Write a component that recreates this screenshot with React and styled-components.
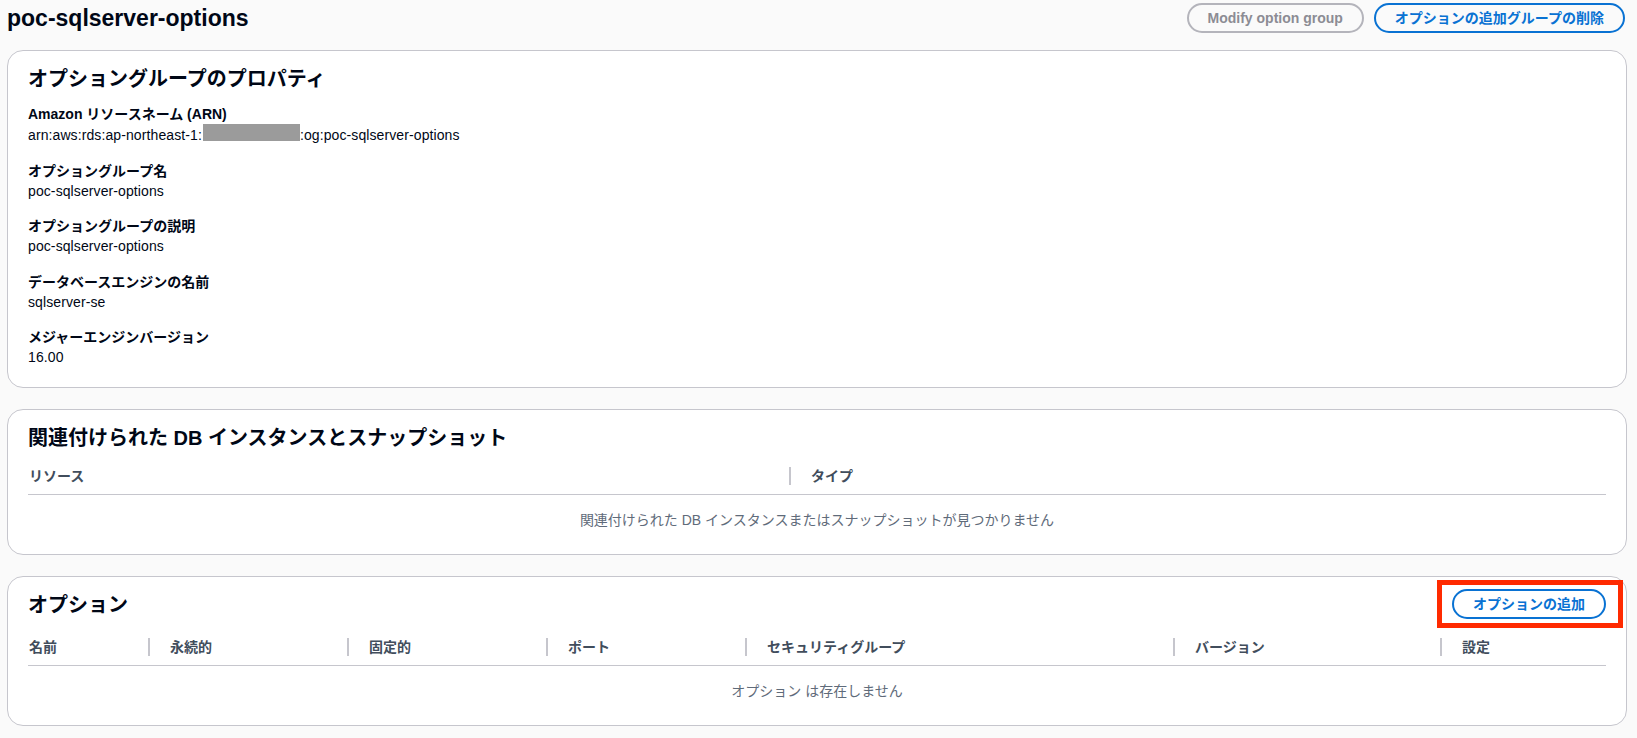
import React from "react";
import styled, { createGlobalStyle, css } from "styled-components";

const GlobalStyle = createGlobalStyle`
  body {
    margin: 0;
    background: #fafafa;
    font-family: "Liberation Sans", "Noto Sans CJK JP", sans-serif;
    color: #000716;
    -webkit-font-smoothing: antialiased;
  }
`;

const Page = styled.div`
  padding: 3px 10px 0 7px;
`;

const PageHeader = styled.header`
  display: flex;
  align-items: center;
  justify-content: space-between;
  height: 30px;
  margin-bottom: 17px;
`;

const PageTitle = styled.h1`
  margin: 0;
  font-size: 23px;
  line-height: 30px;
  font-weight: 700;
`;

const ButtonRow = styled.div`
  display: flex;
  gap: 10px;
  margin-right: 2px;
`;

const Button = styled.button`
  box-sizing: border-box;
  display: inline-flex;
  align-items: center;
  height: 30px;
  padding: 0 19px;
  border: 2px solid #0972d3;
  border-radius: 20px;
  background: transparent;
  color: #0972d3;
  font-family: inherit;
  font-size: 14px;
  line-height: 20px;
  font-weight: 700;
  cursor: pointer;

  &:disabled {
    border-color: #b4b4bb;
    color: #8c8c94;
    cursor: default;
  }
`;

const Card = styled.section`
  background: #ffffff;
  border: 1px solid #c6c6cd;
  border-radius: 16px;
  padding: 14px 20px 20px;
  margin-bottom: 21px;
`;

const CardHeader = styled.div`
  display: flex;
  align-items: flex-start;
  justify-content: space-between;
`;

const CardTitle = styled.h2`
  margin: 0;
  font-size: 20px;
  line-height: 28px;
  font-weight: 700;
`;

const ActionWrap = styled.div`
  position: relative;
  margin: -2px 0 4px;

  ${(p) =>
    p.$highlighted &&
    css`
      &::after {
        content: "";
        position: absolute;
        top: -9px;
        bottom: -9px;
        left: -15px;
        right: -17px;
        border: 5px solid #ff2a00;
        pointer-events: none;
      }
    `}
`;

const PropList = styled.dl`
  display: flex;
  flex-direction: column;
  gap: 15.5px;
  margin: 11px 0 0;
`;

const PropLabel = styled.dt`
  font-size: 14px;
  line-height: 20px;
  font-weight: 700;
`;

const PropValue = styled.dd`
  margin: 0;
  font-size: 14px;
  line-height: 20px;
  letter-spacing: 0.1px;
`;

const Redacted = styled.span`
  display: inline-block;
  width: 97px;
  height: 17px;
  margin-left: 1px;
  background: #9b9b9b;
  vertical-align: -1px;
`;

const HeadRow = styled.div`
  display: grid;
  grid-template-columns: ${(p) => p.$cols};
  border-bottom: 1px solid #c6c6cd;
`;

const HeadCell = styled.div`
  display: flex;
  align-items: center;
  padding: 14px 0 8px ${(p) => (p.$first ? "1px" : "0")};
  font-size: 14px;
  line-height: 20px;
  font-weight: 700;
  color: #414d5c;
`;

const ColDivider = styled.span`
  flex: none;
  width: 2px;
  height: 18px;
  margin-right: 20px;
  background: #c6c6cd;
`;

const EmptyRow = styled.div`
  padding: 15px 0 4px;
  text-align: center;
  font-size: 14px;
  line-height: 20px;
  color: #5f6b7a;
`;

const properties = [
  { label: "オプショングループ名", value: "poc-sqlserver-options" },
  { label: "オプショングループの説明", value: "poc-sqlserver-options" },
  { label: "データベースエンジンの名前", value: "sqlserver-se" },
  { label: "メジャーエンジンバージョン", value: "16.00" },
];

const DataTable = ({ columns, widths, empty }) => (
  <div>
    <HeadRow $cols={widths}>
      {columns.map((c, i) => (
        <HeadCell key={c} $first={i === 0}>
          {i > 0 && <ColDivider />}
          {c}
        </HeadCell>
      ))}
    </HeadRow>
    <EmptyRow>{empty}</EmptyRow>
  </div>
);

export default function App() {
  return (
    <Page>
      <GlobalStyle />
      <PageHeader>
        <PageTitle>poc-sqlserver-options</PageTitle>
        <ButtonRow>
          <Button disabled>Modify option group</Button>
          <Button>オプションの追加グループの削除</Button>
        </ButtonRow>
      </PageHeader>

      <Card>
        <CardHeader>
          <CardTitle>オプショングループのプロパティ</CardTitle>
        </CardHeader>
        <PropList>
          <div>
            <PropLabel>Amazon リソースネーム (ARN)</PropLabel>
            <PropValue>
              arn:aws:rds:ap-northeast-1:<Redacted />:og:poc-sqlserver-options
            </PropValue>
          </div>
          {properties.map((p) => (
            <div key={p.label}>
              <PropLabel>{p.label}</PropLabel>
              <PropValue>{p.value}</PropValue>
            </div>
          ))}
        </PropList>
      </Card>

      <Card>
        <CardHeader>
          <CardTitle>関連付けられた DB インスタンスとスナップショット</CardTitle>
        </CardHeader>
        <DataTable
          columns={["リソース", "タイプ"]}
          widths="761px 1fr"
          empty="関連付けられた DB インスタンスまたはスナップショットが見つかりません"
        />
      </Card>

      <Card>
        <CardHeader>
          <CardTitle>オプション</CardTitle>
          <ActionWrap $highlighted>
            <Button>オプションの追加</Button>
          </ActionWrap>
        </CardHeader>
        <DataTable
          columns={["名前", "永続的", "固定的", "ポート", "セキュリティグループ", "バージョン", "設定"]}
          widths="120px 199px 199px 199px 428px 267px 1fr"
          empty="オプション は存在しません"
        />
      </Card>
    </Page>
  );
}
